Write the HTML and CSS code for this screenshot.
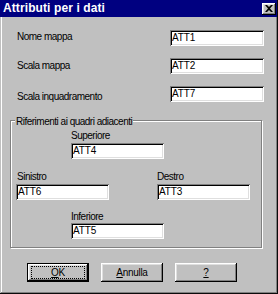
FILE: index.html
```html
<!DOCTYPE html>
<html>
<head>
<meta charset="utf-8">
<link rel="stylesheet" href="styles.css">
</head>
<body>
<div class="window">
  <div class="titlebar">
    <span class="title">Attributi per i dati</span>
    <span class="close"><svg width="8" height="7" viewBox="0 0 8 7"><path d="M0 0h2l2 2 2-2h2L5 3.5 8 7H6L4 5 2 7H0l3-3.5z" fill="#000"/></svg></span>
  </div>
  <div class="row r1"><span class="label l1">Nome mappa</span><span class="edit w-wide">ATT1</span></div>
  <div class="row r2"><span class="label l2">Scala mappa</span><span class="edit w-wide">ATT2</span></div>
  <div class="row r3"><span class="label l3">Scala inquadramento</span><span class="edit w-wide">ATT7</span></div>
  <div class="group">
    <div class="legend">Riferimenti ai quadri adiacenti</div>
    <div class="center-field top">
      <span class="label">Superiore</span>
      <span class="edit w-mid">ATT4</span>
    </div>
    <div class="side-fields">
      <div class="field">
        <span class="label">Sinistro</span>
        <span class="edit w-side">ATT6</span>
      </div>
      <div class="field">
        <span class="label">Destro</span>
        <span class="edit w-side">ATT3</span>
      </div>
    </div>
    <div class="center-field bottom">
      <span class="label">Inferiore</span>
      <span class="edit w-mid">ATT5</span>
    </div>
  </div>
  <div class="buttons">
    <button class="btn default"><span class="focus"><u>O</u>K</span></button>
    <button class="btn"><span><u>A</u>nnulla</span></button>
    <button class="btn"><span><u>?</u></span></button>
  </div>
</div>
</body>
</html>
```
FILE: styles.css
```css
* { box-sizing: border-box; }
html, body { margin: 0; padding: 0; background: #c0c0c0; }
body {
  font-family: "Liberation Sans", Arial, sans-serif;
  font-size: 10px;
  line-height: 12px;
  color: #000;
}
.window {
  width: 278px;
  height: 294px;
  background: #c0c0c0;
  display: flex;
  flex-direction: column;
  box-shadow: inset -1px -1px #0a0a0a, inset 1px 1px #c0c0c0, inset -2px -2px #808080, inset 2px 2px #fff;
}
.titlebar {
  height: 17px;
  margin-right: 1px;
  background: #000080;
  display: flex;
  justify-content: space-between;
  align-items: flex-start;
  padding-left: 3px;
}
.title {
  color: #fff;
  font-weight: bold;
  font-size: 12px;
  line-height: 17px;
  letter-spacing: 0.1px;
}
.close {
  width: 14px;
  height: 12px;
  margin: 3px 1px 0 0;
  background: #c0c0c0;
  box-shadow: inset -1px -1px #000, inset 1px 1px #fff, inset -2px -2px #808080, inset 2px 2px #dfdfdf;
  display: flex;
  align-items: center;
  justify-content: center;
  padding-bottom: 1px;
}
.close svg { display: block; }
.label { letter-spacing: -0.5px; white-space: nowrap; }
.row {
  display: flex;
  justify-content: space-between;
  align-items: flex-start;
  padding: 0 14px 0 17px;
  height: 16px;
}
.r1 { margin-top: 13px; }
.r2 { margin-top: 12px; }
.r3 { margin-top: 12px; }
.l1 { margin-top: 1px; }
.l2 { margin-top: 2px; }
.l3 { margin-top: 5px; }
.edit {
  display: block;
  height: 16px;
  background: #fff;
  padding: 1px 0 0 2px;
  line-height: 13px;
  box-shadow: inset 1px 1px #808080, inset -1px -1px #fff, inset 2px 2px #000, inset -2px -2px #dfdfdf;
  letter-spacing: -0.1px;
}
.w-wide { width: 94px; }
.w-mid { width: 93px; }
.w-side { width: 93px; }
.group {
  margin: 18px 0 0 10px;
  width: 252px;
  border: 1px solid #808080;
  box-shadow: 1px 1px 0 #fff, inset 1px 1px 0 #fff;
  padding: 0 0 8px 0;
}
.legend {
  width: max-content;
  margin: -5px 0 0 4px;
  padding: 0 1px;
  background: #c0c0c0;
  letter-spacing: -0.5px;
}
.center-field {
  display: flex;
  flex-direction: column;
  margin-left: 60px;
}
.center-field.top { margin-top: 2px; }
.center-field.top .edit { margin-top: 1px; }
.center-field.bottom { margin-top: 11px; }
.side-fields {
  display: flex;
  justify-content: space-between;
  margin: 12px 0 0 5px;
  padding-right: 11px;
}
.field { display: flex; flex-direction: column; }
.field .edit { margin-top: 1px; }
.field:first-child .label { margin-left: 1px; }
.buttons {
  display: flex;
  gap: 12px;
  margin: 15px 0 0 27px;
}
.btn {
  width: 62px;
  height: 19px;
  padding: 0;
  border: none;
  background: #c0c0c0;
  font: inherit;
  color: #000;
  display: flex;
  align-items: center;
  justify-content: center;
  box-shadow: inset -1px -1px #000, inset 1px 1px #fff, inset -2px -2px #808080, inset 2px 2px #dfdfdf;
  letter-spacing: -0.3px;
}
.btn.default {
  box-shadow: inset 0 0 0 1px #000, inset -2px -2px #000, inset 2px 2px #fff, inset -3px -3px #808080, inset 3px 3px #dfdfdf;
}
.btn .focus {
  width: 54px;
  height: 13px;
  outline: 1px dotted #000;
  outline-offset: -1px;
  display: flex;
  align-items: center;
  justify-content: center;
}
u { text-decoration: underline; text-underline-offset: 1px; }
```
